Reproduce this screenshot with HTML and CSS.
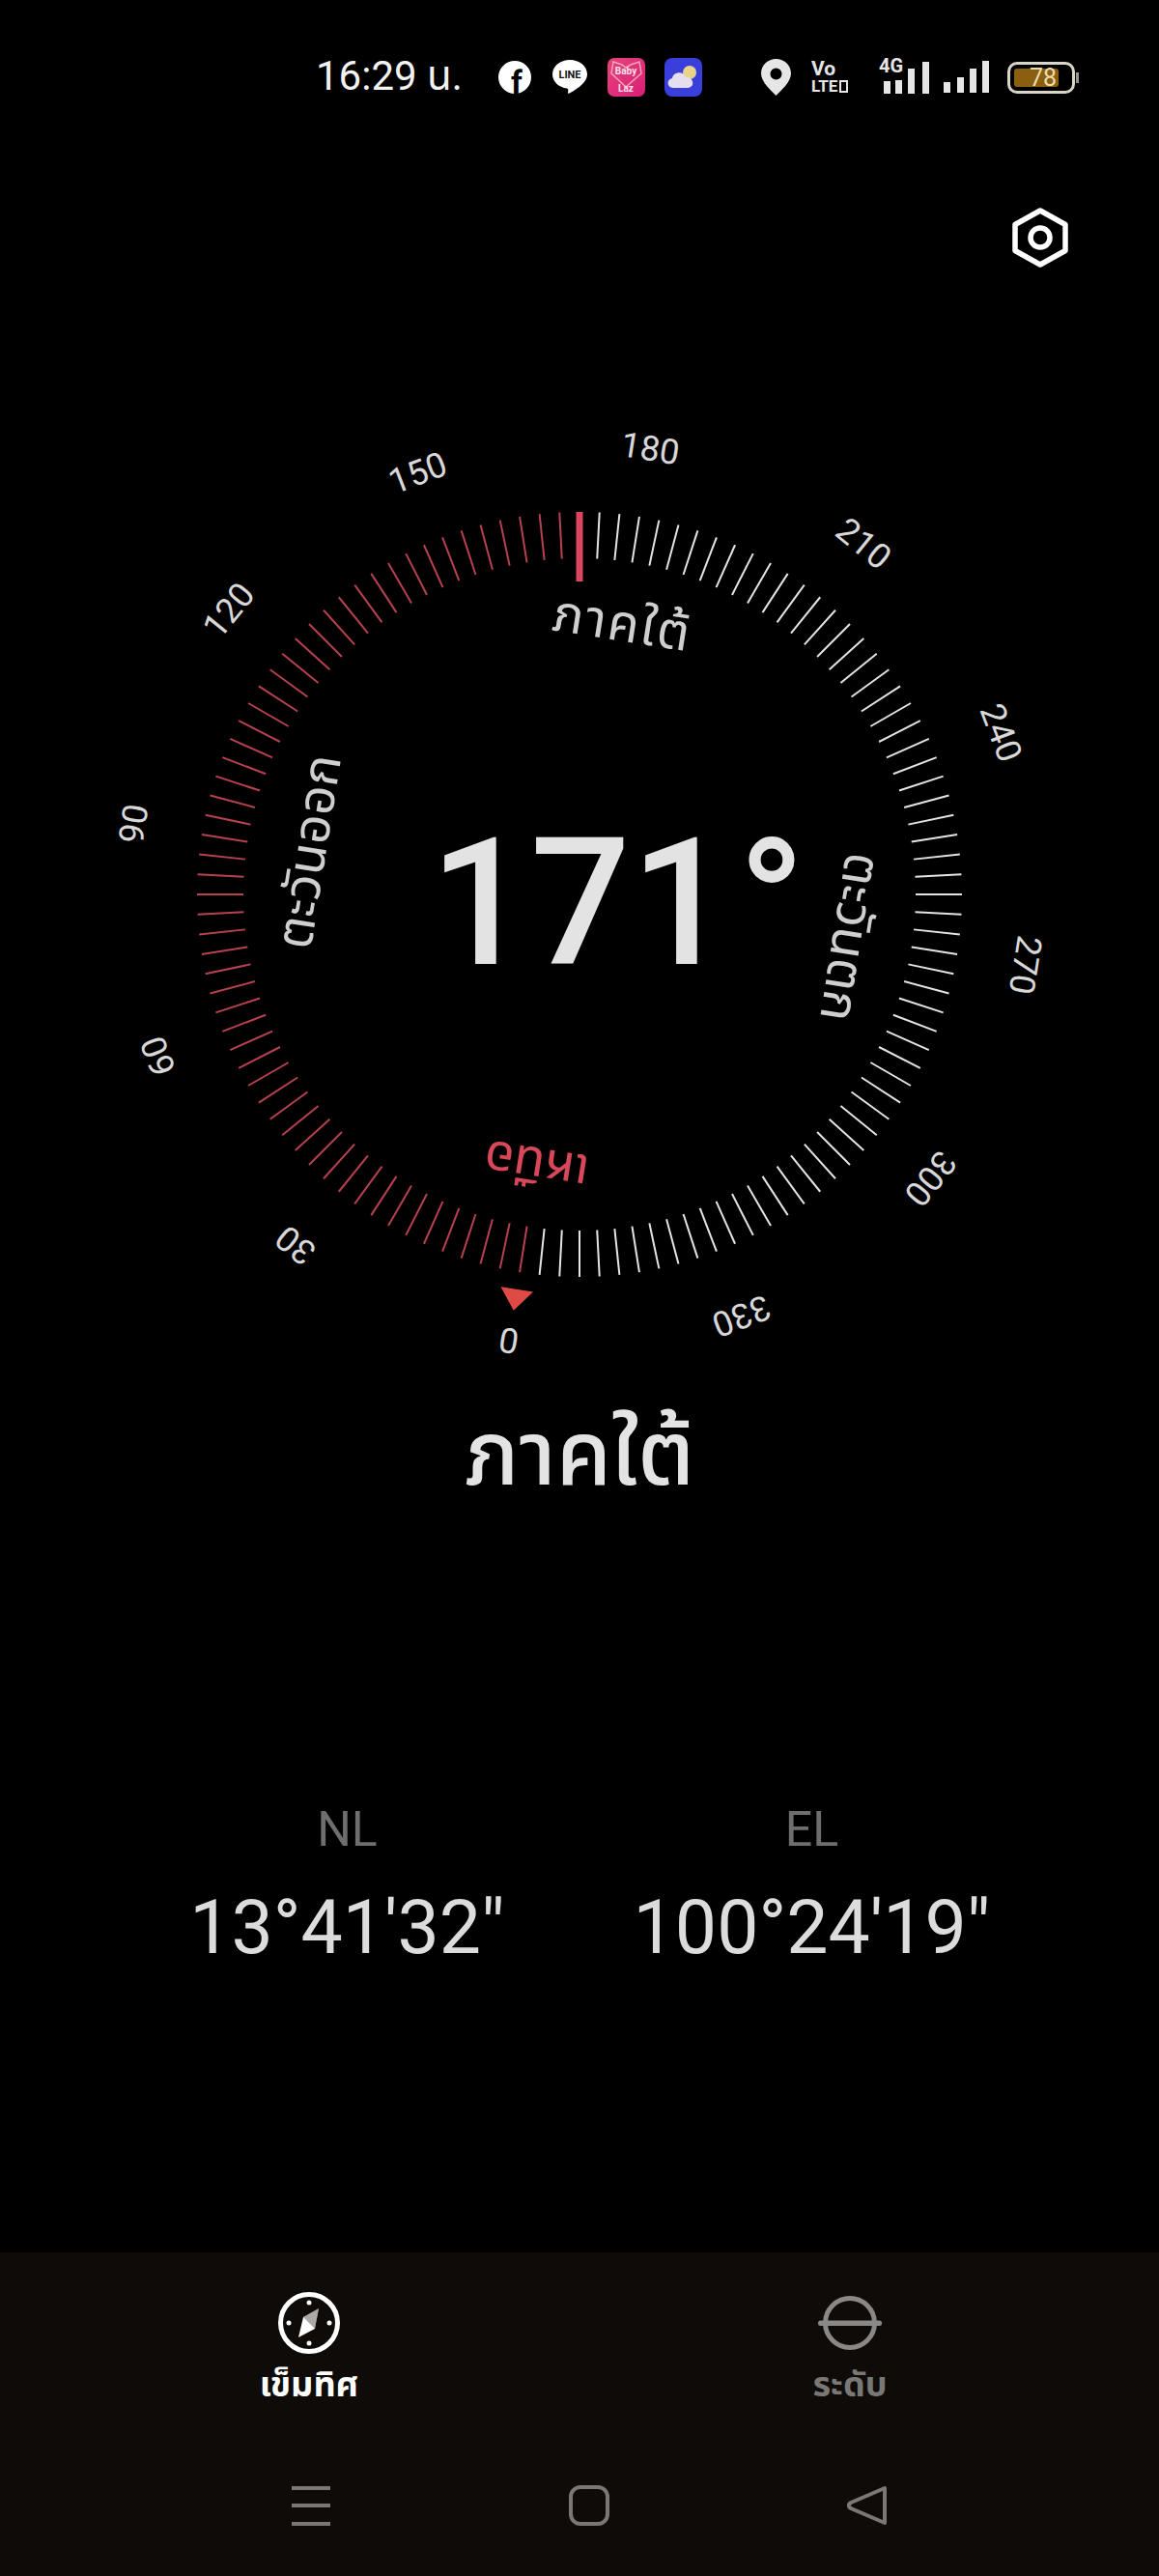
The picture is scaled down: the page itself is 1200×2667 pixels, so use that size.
FILE: index.html
```html
<!doctype html>
<html>
<head>
<meta http-equiv="Content-Type" content="text/html; charset=utf-8">
<title>เข็มทิศ</title>
<link rel="stylesheet" href="styles.css">
</head>
<body>
<div class="status">
	<span class="time">16:29 น.</span>
	<div class="notifs">
		<svg class="ic-fb" viewBox="0 0 36 36">
			<circle cx="18" cy="18" r="17" fill="#fff"/>
			<text x="20" y="35" class="fb-f">f</text>
		</svg>
		<svg class="ic-line" viewBox="0 0 38 38">
			<path d="M19 1C9 1 1 7.500 1 16c0 7.500 6.500 13.500 15 14.500 1.500.3 1.500 1.500 1 4-.2 1.500 1 1.500 2.500.6C24 32.500 37 25 37 16 37 7.500 29 1 19 1z" fill="#fff"/>
			<text x="19" y="20" class="line-t">LINE</text>
		</svg>
		<svg class="ic-app" viewBox="0 0 39 40">
			<defs><linearGradient id="lz" x1="0" y1="0" x2="1" y2="1"><stop offset="0" stop-color="#e8447a"/><stop offset="1" stop-color="#d81e78"/></linearGradient></defs>
			<rect width="39" height="40" rx="7" fill="url(#lz)"/>
			<path d="M6 4l9 3 4 3 5-3 9-3 2 12-16 14L4 16z" fill="none" stroke="#f6a6bd" stroke-width="1.500"/>
			<text x="19" y="17" class="lz-t">Baby</text>
			<text x="19" y="35" class="lz-t">Laz</text>
		</svg>
		<svg class="ic-app" viewBox="0 0 39 40">
			<rect width="39" height="40" rx="8" fill="#3a3fdc"/>
			<circle cx="26" cy="15" r="7" fill="#e9d58a"/>
			<path d="M9 31c-7 0-7-9-1-10 1-7 12-8 14-1 8-1 11 11 1 11z" fill="#e4def0"/>
		</svg>
	</div>
	<div class="sys">
		<svg class="ic-pin" viewBox="0 0 31 38">
			<path fill-rule="evenodd" d="M15.500 0C7 0 0 6.500 0 15c0 9 10 17 15.500 23C21 32 31 24 31 15 31 6.500 24 0 15.500 0zm0 9.500a6 6 0 1 1 0 12 6 6 0 0 1 0-12z" fill="#e6e6e6"/>
		</svg>
		<div class="volte"><span class="vo">Vo</span><span class="lte">LTE<i class="lte-box"></i></span></div>
		<div class="sig-a">
			<svg viewBox="0 0 48 34">
				<rect x="1" y="20" width="7" height="13" fill="#e6e6e6"/>
				<rect x="13" y="19" width="7" height="14" fill="#e6e6e6"/>
				<rect x="26" y="7" width="7" height="26" fill="#e6e6e6"/>
				<rect x="41" y="0" width="7" height="33" fill="#e6e6e6"/>
			</svg>
			<span class="net">4G</span>
		</div>
		<svg class="ic-sig" viewBox="0 0 48 34">
			<rect x="0" y="22" width="7" height="11" fill="#e6e6e6"/>
			<rect x="14" y="17" width="7" height="16" fill="#e6e6e6"/>
			<rect x="27" y="8" width="7" height="25" fill="#e6e6e6"/>
			<rect x="40" y="0" width="7" height="33" fill="#e6e6e6"/>
		</svg>
		<div class="battery"><div class="batt-fill"></div><span class="batt-num">78</span></div>
	</div>
</div>

<div class="tools">
	<svg class="ic-gear" viewBox="0 0 60 62">
		<path d="M30 3l26 14.500v27L30 59 4 44.500v-27z" fill="none" stroke="#fff" stroke-width="5.500" stroke-linejoin="round"/>
		<circle cx="30" cy="31" r="10" fill="none" stroke="#fff" stroke-width="5.500"/>
	</svg>
</div>

<div class="dial">
	<svg id="ring" class="ring" viewBox="-600 -500 1200 1000"></svg>
	<div class="deg">171<span class="deg-mark">°</span></div>
</div>

<div class="heading">ภาคใต้</div>

<div class="coords">
	<div class="coord"><p class="coord-k">NL</p><p class="coord-v">13°41'32"</p></div>
	<div class="coord"><p class="coord-k">EL</p><p class="coord-v">100°24'19"</p></div>
</div>

<div class="bottom">
	<div class="tabs">
		<div class="tab tab-on">
			<svg viewBox="0 0 68 68">
				<circle cx="34" cy="34" r="29.500" fill="none" stroke="#fff" stroke-width="5"/>
				<circle cx="34" cy="13" r="2.500" fill="#fff"/>
				<circle cx="34" cy="55" r="2.500" fill="#fff"/>
				<circle cx="13" cy="34" r="2.500" fill="#fff"/>
				<circle cx="55" cy="34" r="2.500" fill="#fff"/>
				<path d="M44 19L40 40 23 49 28 28z" fill="#fff"/>
				<path d="M44 19L28 28 40 40z" fill="#0f0b08" opacity=".35"/>
			</svg>
			<span>เข็มทิศ</span>
		</div>
		<div class="tab">
			<svg viewBox="0 0 68 68">
				<circle cx="34" cy="34" r="25.500" fill="none" stroke="#8a8886" stroke-width="5"/>
				<rect x="1" y="31.500" width="66" height="5.500" rx="2.500" fill="#8a8886"/>
			</svg>
			<span>ระดับ</span>
		</div>
	</div>
	<div class="nav">
		<svg viewBox="0 0 42 42"><path d="M1 3h40M1 21h40M1 40h40" stroke="#7a7876" stroke-width="4" fill="none"/></svg>
		<svg viewBox="0 0 42 42"><rect x="2" y="2" width="38" height="38" rx="10" stroke="#7a7876" stroke-width="4" fill="none"/></svg>
		<svg viewBox="0 0 42 42"><path d="M39 3v36L4 24c-3-2-3-4 0-6z" stroke="#7a7876" stroke-width="4" fill="none" stroke-linejoin="round"/></svg>
	</div>
</div>
<script src="script.js"></script>
</body>
</html>
```

FILE: styles.css
```css
*{
	box-sizing:border-box;
}
html,body{
	margin:0;
	padding:0;
}
body{
	width:1200px;
	height:2667px;
	background-color:#000;
	color:#e3e3e3;
	font-family:Roboto,"Noto Sans","Noto Sans Thai","DejaVu Sans",sans-serif;
	display:flex;
	flex-direction:column;
	overflow:hidden;
}
svg{
	display:block;
}

/* status bar */
.status{
	display:flex;
	align-items:center;
	height:100px;
	padding:60px 0 0 327px;
}
.time{
	width:154px;
	font-size:42px;
	color:#f2f2f2;
	white-space:nowrap;
}
.notifs{
	display:flex;
	align-items:center;
	gap:20px;
	margin-left:34px;
}
.ic-fb{
	width:36px;
	height:36px;
	overflow:visible;
}
.fb-f{
	font-size:33px;
	font-weight:700;
	text-anchor:middle;
	fill:#000;
}
.ic-line{
	width:38px;
	height:38px;
}
.line-t{
	font-size:11px;
	font-weight:700;
	text-anchor:middle;
	fill:#111;
}
.ic-app{
	width:39px;
	height:40px;
}
.lz-t{
	font-size:10px;
	font-weight:700;
	text-anchor:middle;
	fill:#fbe3ea;
}
.sys{
	display:flex;
	align-items:center;
	margin-left:61px;
}
.ic-pin{
	width:31px;
	height:38px;
}
.volte{
	display:flex;
	flex-direction:column;
	width:40px;
	margin-left:21px;
	font-weight:700;
	color:#e6e6e6;
}
.vo{
	font-size:21px;
	line-height:19px;
}
.lte{
	display:flex;
	align-items:center;
	font-size:17px;
	line-height:17px;
}
.lte-box{
	display:block;
	width:9px;
	height:13px;
	margin-left:2px;
	border:2px solid #e6e6e6;
}
.sig-a{
	position:relative;
	width:52px;
	height:36px;
	margin-left:30px;
}
.sig-a svg{
	position:absolute;
	right:0;
	bottom:0;
	width:48px;
	height:34px;
}
.net{
	position:absolute;
	left:0;
	top:-4px;
	font-size:20px;
	font-weight:700;
	color:#e6e6e6;
	line-height:20px;
}
.ic-sig{
	width:48px;
	height:34px;
	margin-left:15px;
}
.battery{
	position:relative;
	display:flex;
	align-items:center;
	justify-content:center;
	width:70px;
	height:33px;
	margin-left:18px;
	border:3px solid #d8d4c8;
	border-radius:10px;
}
.battery:after{
	content:"";
	position:absolute;
	right:-7px;
	top:8px;
	width:3px;
	height:11px;
	background-color:#9a968c;
}
.batt-fill{
	position:absolute;
	left:4px;
	top:4px;
	bottom:4px;
	width:46px;
	background-color:#8a5f10;
	border-radius:3px;
}
.batt-num{
	position:relative;
	font-size:25px;
	color:#ecdcae;
	margin-left:4px;
}

/* settings */
.tools{
	display:flex;
	justify-content:flex-end;
	padding:115px 93px 0 0;
}
.ic-gear{
	width:60px;
	height:62px;
}

/* dial */
.dial{
	position:relative;
	display:flex;
	align-items:center;
	justify-content:center;
	height:1000px;
	margin-top:149px;
}
.ring{
	position:absolute;
	left:0;
	top:0;
	width:1200px;
	height:1000px;
}
.tick{
	stroke:#e4e4e4;
	stroke-width:2;
}
.tick-red{
	stroke:#b8414f;
}
.tick-now{
	stroke:#d9475f;
	stroke-width:7;
}
.num{
	font-size:36px;
	fill:#d8d8d8;
	text-anchor:middle;
	dominant-baseline:central;
}
.dir{
	font-size:53px;
	fill:#cfcfcf;
	text-anchor:middle;
	dominant-baseline:central;
}
.dir-s{
	letter-spacing:2px;
}
.dir-n{
	fill:#d9475a;
}
.north{
	fill:#e04a45;
}
.deg{
	position:relative;
	left:1px;
	top:9px;
	font-size:183px;
	font-weight:500;
	line-height:1;
	color:#e3e3e3;
}
.deg-mark{
	position:absolute;
	left:100%;
	top:1px;
	margin-left:7px;
}

.heading{
	text-align:center;
	font-size:92px;
	font-weight:500;
	line-height:100px;
	margin-top:30px;
	color:#e3e3e3;
}

/* coordinates */
.coords{
	display:grid;
	grid-template-columns:481px 481px;
	justify-content:center;
	margin-top:308px;
}
.coord{
	text-align:center;
}
.coord p{
	margin:0;
}
.coord-k{
	font-size:50px;
	line-height:60px;
	color:#6e6e6e;
}
.coord-v{
	font-size:77px;
	font-weight:400;
	line-height:90px;
	padding-top:27px;
	color:#dcdcdc;
}

/* bottom */
.bottom{
	margin-top:auto;
	height:335px;
	background-color:#0f0b08;
}
.tabs{
	display:grid;
	grid-template-columns:560px 560px;
	justify-content:center;
	padding-top:39px;
}
.tab{
	display:flex;
	flex-direction:column;
	align-items:center;
	font-size:36px;
	font-weight:700;
	line-height:48px;
	color:#7a7876;
}
.tab svg{
	width:68px;
	height:68px;
	margin-bottom:6px;
}
.tab-on{
	color:#fff;
}
.nav{
	display:flex;
	justify-content:center;
	gap:246px;
	padding:80px 0 0 20px;
}
.nav svg{
	width:42px;
	height:42px;
}
```

FILE: script.js
```js
// ticks and labels of the dial, the current heading sits at the top
var svgNS="http://www.w3.org/2000/svg";
var ring=document.getElementById("ring");
var heading=171;

function add(tag,attrs,txt){
	var el=document.createElementNS(svgNS,tag);
	for(var k in attrs){
		el.setAttribute(k,attrs[k]);
	}
	if(txt){
		el.textContent=txt;
	}
	ring.appendChild(el);
	return el;
}

// 3 degree ticks, red from north round to the heading
for(var a=0;a<360;a+=3){
	var cls="tick"+(a<heading?" tick-red":"");
	add("line",{x1:0,y1:-396,x2:0,y2:-348,"class":cls,transform:"rotate("+(a-heading)+")"});
}
add("line",{x1:0,y1:-396,x2:0,y2:-324,"class":"tick tick-now"});

// numbers
for(var n=0;n<360;n+=30){
	add("text",{"class":"num",transform:"rotate("+(n-heading)+") translate(0,-467)"},String(n));
}

// direction names
var dirs=[[180,"ภาคใต้"," dir-s"],[90,"ตะวันออก",""],[270,"ตะวันตก",""],[0,"เหนือ"," dir-n"]];
for(var d=0;d<dirs.length;d++){
	add("text",{"class":"dir"+dirs[d][2],transform:"rotate("+(dirs[d][0]-heading)+") translate(0,-284)"},dirs[d][1]);
}

// north marker
add("path",{d:"M-17 -414H17L0 -436z","class":"north",transform:"rotate("+(0-heading)+")"});
```
